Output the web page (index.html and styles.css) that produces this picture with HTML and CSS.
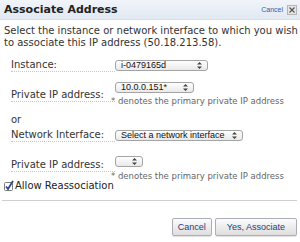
FILE: index.html
```html
<!DOCTYPE html>
<html lang="en">
<head>
  <meta charset="UTF-8">
  <title>Associate Address</title>
  <link rel="stylesheet" href="styles.css">
</head>
<body>
  <div class="dialog">
    <div class="dialog-header">
      <span class="title">Associate Address</span>
      <span class="header-cancel">
        <a href="#">Cancel</a>
        <span class="close-box">
          <svg width="6" height="6" viewBox="0 0 6 6">
            <path d="M0.5 0.5 L5.5 5.5 M5.5 0.5 L0.5 5.5" stroke="#555" stroke-width="1.2"/>
          </svg>
        </span>
      </span>
    </div>

    <div class="dialog-body">
      <p class="intro">Select the instance or network interface to which you wish to associate this IP address (50.18.213.58).</p>

      <div class="row row-instance">
        <span class="label">Instance:</span>
        <span class="field">
          <span class="select w-instance">i-0479165d<svg class="arrows" width="5" height="7" viewBox="0 0 5 7"><path d="M2.5 0 L5 2.5 L0 2.5 Z M2.5 7 L5 4.5 L0 4.5 Z" fill="#444"/></svg></span>
        </span>
      </div>

      <div class="row row-ip">
        <span class="label">Private IP address:</span>
        <span class="field">
          <span class="select w-ip">10.0.0.151*<svg class="arrows" width="5" height="7" viewBox="0 0 5 7"><path d="M2.5 0 L5 2.5 L0 2.5 Z M2.5 7 L5 4.5 L0 4.5 Z" fill="#444"/></svg></span>
          <span class="note">* denotes the primary private IP address</span>
        </span>
      </div>

      <div class="or">or</div>

      <div class="row row-eni">
        <span class="label">Network Interface:</span>
        <span class="field">
          <span class="select w-eni">Select a network interface<svg class="arrows" width="5" height="7" viewBox="0 0 5 7"><path d="M2.5 0 L5 2.5 L0 2.5 Z M2.5 7 L5 4.5 L0 4.5 Z" fill="#444"/></svg></span>
        </span>
      </div>

      <div class="row row-ip2">
        <span class="label">Private IP address:</span>
        <span class="field">
          <span class="select w-empty"><svg class="arrows" width="5" height="7" viewBox="0 0 5 7"><path d="M2.5 0 L5 2.5 L0 2.5 Z M2.5 7 L5 4.5 L0 4.5 Z" fill="#444"/></svg></span>
          <span class="note">* denotes the primary private IP address</span>
        </span>
      </div>

      <label class="reassoc">
        <svg class="check" width="10" height="11" viewBox="0 0 10 11">
          <rect x="0.5" y="2.5" width="8" height="8" rx="1" fill="#fff" stroke="#7d7d7d"/>
          <path d="M2 6.5 L4 9 L9 1" fill="none" stroke="#2b4a8a" stroke-width="1.8"/>
        </svg>
        Allow Reassociation
      </label>
    </div>

    <div class="dialog-footer">
      <button class="btn btn-cancel">Cancel</button>
      <button class="btn btn-yes">Yes, Associate</button>
    </div>
  </div>
</body>
</html>
```

FILE: styles.css
```css
body {
  margin: 0;
  background: #fff;
  font-family: "DejaVu Sans", Verdana, sans-serif;
  color: #333;
}

.dialog {
  width: 300px;
  height: 242px;
  overflow: hidden;
}

.dialog-header {
  height: 19px;
  display: flex;
  align-items: center;
  justify-content: space-between;
  padding: 0 3px 0 4px;
  background: linear-gradient(#f1f4f9, #e2e9f3);
  border-bottom: 1px solid #d6dfeb;
}

.title {
  font-size: 11px;
  font-weight: bold;
  color: #222;
}

.header-cancel {
  display: flex;
  align-items: center;
  gap: 4px;
}

.header-cancel a {
  font-family: "Liberation Sans", Arial, sans-serif;
  font-size: 7px;
  color: #2a5db0;
  text-decoration: none;
}

.close-box {
  display: flex;
  align-items: center;
  justify-content: center;
  width: 8px;
  height: 8px;
  border: 1px solid #b5b5b5;
  background: #e6e6e6;
}

.dialog-body {
  padding: 0 2px 0 4px;
}

.intro {
  margin: 5px 0 0;
  font-size: 10px;
  line-height: 12px;
  color: #333;
}

.row {
  display: flex;
  align-items: flex-start;
  padding-left: 7px;
}

.label {
  width: 104px;
  font-size: 10px;
  line-height: 12px;
  color: #333;
  border-bottom: 1px dotted #c8c8c8;
}

.field {
  display: flex;
  flex-direction: column;
  align-items: flex-start;
}

.select {
  position: relative;
  display: block;
  height: 9px;
  line-height: 9px;
  padding-left: 5px;
  border: 1px solid #a4a4a4;
  border-radius: 3px;
  background: linear-gradient(#fefefe, #e9e9e9);
  font-family: "Liberation Sans", Arial, sans-serif;
  font-size: 9px;
  color: #111;
}

.arrows {
  position: absolute;
  right: 5px;
  top: 1px;
}

.w-instance { width: 86px; }
.w-ip { width: 72px; }
.w-eni { width: 121px; }
.w-empty { width: 21px; }

.note {
  margin-left: -4px;
  font-size: 8.5px;
  line-height: 10px;
  color: #666;
  white-space: nowrap;
}

.row-instance { margin-top: 11px; }
.row-instance .label { margin-top: -1px; }

.row-ip { margin-top: 10px; }
.row-ip .label { margin-top: 7px; }
.row-ip .note { margin-top: 3px; }

.or {
  margin: 8px 0 0 7px;
  font-size: 10px;
  line-height: 12px;
}

.row-eni { margin-top: 4px; }
.row-eni .label { margin-top: -1px; }

.row-ip2 { margin-top: 14px; }
.row-ip2 .label { margin-top: 3px; }
.row-ip2 .note { margin-top: 4px; }

.reassoc {
  display: flex;
  align-items: center;
  gap: 1px;
  margin-top: -1px;
  font-size: 10px;
  line-height: 12px;
  color: #222;
}

.check {
  margin-top: -2px;
}

.dialog-footer {
  margin: 8px 3px 0 2px;
  padding: 17px 0 0;
  border-top: 1px solid #cfcfcf;
  display: flex;
  justify-content: flex-end;
  gap: 3px;
}

.btn {
  height: 18px;
  border: 1px solid #a9aeb8;
  border-radius: 2px;
  background: linear-gradient(#fcfcfc, #dedede);
  font-family: "Liberation Sans", Arial, sans-serif;
  font-size: 9px;
  color: #1c3d86;
  box-shadow: 0 1px 1px rgba(0, 0, 0, 0.12);
}

.btn-cancel {
  padding: 0 5px;
}

.btn-yes {
  padding: 0 11px;
}
```
